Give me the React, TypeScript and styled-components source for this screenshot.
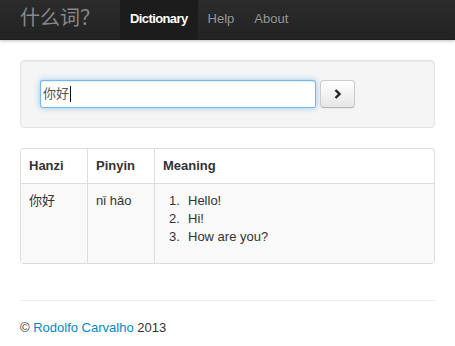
import React from "react";
import styled, { createGlobalStyle } from "styled-components";

const Global = createGlobalStyle`
  html, body { margin: 0; padding: 0; background: #fff; }
  body {
    font-family: "Liberation Sans", "Noto Sans CJK SC", sans-serif;
    font-size: 13px;
    line-height: 18px;
    color: #333;
  }
  * { box-sizing: border-box; }
`;

const Navbar = styled.div`
  height: 40px;
  background: linear-gradient(to bottom, #2c2c2c, #222222);
  box-shadow: 0 1px 3px rgba(0, 0, 0, 0.25), inset 0 -1px 0 rgba(0, 0, 0, 0.1);
  display: flex;
  align-items: stretch;
  padding: 0 20px;
`;

const Brand = styled.a`
  font-family: "Liberation Sans", "Noto Sans CJK SC", sans-serif;
  font-size: 20px;
  line-height: 1;
  color: #888;
  padding: 8px 0 12px 0;
  width: 100px;
  display: flex;
  align-items: center;
  text-decoration: none;
`;

const Nav = styled.ul`
  list-style: none;
  margin: 0;
  padding: 0;
  display: flex;
`;

const NavLink = styled.a<{ $active?: boolean }>`
  display: flex;
  align-items: center;
  padding: 0 10px 2px;
  height: 40px;
  text-decoration: none;
  font-size: 13px;
  color: ${(p) => (p.$active ? "#fff" : "#999")};
  background: ${(p) => (p.$active ? "#1c1c1c" : "transparent")};
  font-weight: ${(p) => (p.$active ? "bold" : "normal")};
  letter-spacing: ${(p) => (p.$active ? "-0.6px" : "0")};
  text-shadow: 0 -1px 0 rgba(0, 0, 0, 0.25);
`;

const Container = styled.div`
  padding: 20px 20px 0;
`;

const Well = styled.div`
  background: #f5f5f5;
  border: 1px solid #e3e3e3;
  border-radius: 4px;
  padding: 19px;
  box-shadow: inset 0 1px 1px rgba(0, 0, 0, 0.05);
  display: flex;
  align-items: center;
  gap: 4px;
  margin-bottom: 20px;
`;

const FakeInput = styled.div`
  width: 276px;
  height: 28px;
  padding: 4px 2px;
  background: #fff;
  border: 1px solid rgba(82, 168, 236, 0.8);
  border-radius: 3px;
  box-shadow: inset 0 1px 1px rgba(0, 0, 0, 0.075), 0 0 6px rgba(82, 168, 236, 0.6);
  font-size: 13px;
  line-height: 18px;
  color: #555;
  display: flex;
  align-items: center;
`;

const Caret = styled.span`
  display: inline-block;
  width: 1px;
  height: 16px;
  background: #111;
  margin-left: 1px;
`;

const Button = styled.button`
  width: 35px;
  height: 28px;
  border: 1px solid #ccc;
  border-bottom-color: #b3b3b3;
  border-radius: 4px;
  background: linear-gradient(to bottom, #ffffff, #e6e6e6);
  box-shadow: inset 0 1px 0 rgba(255, 255, 255, 0.2), 0 1px 2px rgba(0, 0, 0, 0.05);
  display: flex;
  align-items: center;
  justify-content: center;
  padding: 0;
`;

const Table = styled.table`
  width: 100%;
  border-collapse: separate;
  border-spacing: 0;
  border: 1px solid #ddd;
  border-left: 0;
  border-radius: 4px;
  margin-bottom: 0;
  overflow: hidden;
`;

const Th = styled.th<{ $w?: number }>`
  text-align: left;
  font-weight: bold;
  padding: 8px;
  line-height: 18px;
  border-left: 1px solid #ddd;
  width: ${(p) => (p.$w ? `${p.$w}px` : "auto")};
`;

const Td = styled.td`
  vertical-align: top;
  padding: 8px;
  line-height: 18px;
  border-left: 1px solid #ddd;
  border-top: 1px solid #ddd;
  background: #f9f9f9;
`;

const Meanings = styled.ol`
  margin: 0 0 9px 25px;
  padding: 0;
  list-style: none;
  counter-reset: item;
`;

const Meaning = styled.li`
  counter-increment: item;
  &::before {
    content: counter(item) ".";
    display: inline-block;
    width: 19px;
    margin-left: -19px;
  }
`;

const Footer = styled.footer`
  padding: 0 20px;
`;

const Rule = styled.hr`
  margin: 36px 0 17px;
  border: 0;
  border-top: 1px solid #eeeeee;
  border-bottom: 1px solid #ffffff;
`;

const Copy = styled.p`
  margin: 0;
`;

const Link = styled.a`
  color: #0088cc;
  text-decoration: none;
`;

export default function App() {
  return (
    <>
      <Global />
      <Navbar>
        <Brand href="#">什么词？</Brand>
        <Nav>
          <li>
            <NavLink $active href="#">Dictionary</NavLink>
          </li>
          <li>
            <NavLink href="#">Help</NavLink>
          </li>
          <li>
            <NavLink href="#">About</NavLink>
          </li>
        </Nav>
      </Navbar>
      <Container>
        <Well>
          <FakeInput>
            你好
            <Caret />
          </FakeInput>
          <Button aria-label="Search">
            <svg width="8" height="10" viewBox="0 0 8 10">
              <path d="M1.5 1 L5.5 5 L1.5 9" fill="none" stroke="#222" strokeWidth="2.4" />
            </svg>
          </Button>
        </Well>
        <Table>
          <thead>
            <tr>
              <Th $w={67}>Hanzi</Th>
              <Th $w={67}>Pinyin</Th>
              <Th>Meaning</Th>
            </tr>
          </thead>
          <tbody>
            <tr>
              <Td>你好</Td>
              <Td>nǐ hǎo</Td>
              <Td>
                <Meanings>
                  <Meaning>Hello!</Meaning>
                  <Meaning>Hi!</Meaning>
                  <Meaning>How are you?</Meaning>
                </Meanings>
              </Td>
            </tr>
          </tbody>
        </Table>
      </Container>
      <Footer>
        <Rule />
        <Copy>
          © <Link href="#">Rodolfo Carvalho</Link> 2013
        </Copy>
      </Footer>
    </>
  );
}
